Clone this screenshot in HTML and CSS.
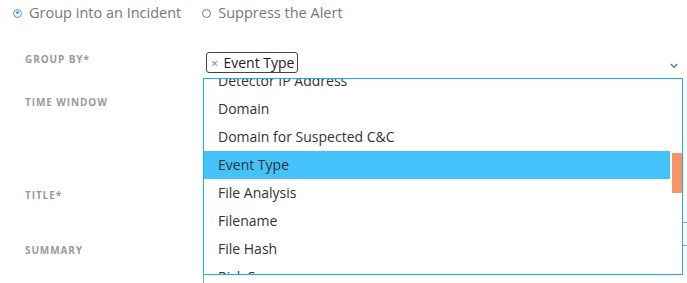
FILE: index.html
```html
<!DOCTYPE html>
<html>
  <head>
    <meta charset="UTF-8" />
    <title>Alert Rule</title>
    <link rel="stylesheet" href="styles.css">
  </head>
  <body>
    <div class="radios">
      <label class="radio">
        <span class="dot checked"></span>
        Group into an Incident
      </label>
      <label class="radio">
        <span class="dot"></span>
        Suppress the Alert
      </label>
    </div>

    <div class="form">
      <div class="row row-group">
        <div class="label">Group By*</div>
        <div class="field">
          <div class="select">
            <span class="chip"><span class="chip-x">&times;</span>Event Type</span>
            <svg class="chevron" width="8" height="6" viewBox="0 0 8 6">
              <path d="M0.8 1 L4 4.4 L7.2 1" fill="none" stroke="#5a6a80" stroke-width="1.3" />
            </svg>
            <div class="dropdown">
              <div class="options">
                <ul class="list">
                  <li>Detector IP Address</li>
                  <li>Domain</li>
                  <li>Domain for Suspected C&amp;C</li>
                  <li class="active">Event Type</li>
                  <li>File Analysis</li>
                  <li>Filename</li>
                  <li>File Hash</li>
                  <li>Risk Score</li>
                  <li>Source IP</li>
                </ul>
              </div>
              <div class="track"><div class="thumb"></div></div>
            </div>
          </div>
        </div>
      </div>

      <div class="row row-time">
        <div class="label">Time Window</div>
        <div class="field"></div>
      </div>

      <div class="row row-title">
        <div class="label">Title*</div>
        <div class="field"><div class="input"></div></div>
      </div>

      <div class="row row-summary">
        <div class="label">Summary</div>
        <div class="field"><div class="textarea"></div></div>
      </div>
    </div>
  </body>
</html>
```

FILE: styles.css
```css
body {
  margin: 0;
  font-family: "Open Sans", "DejaVu Sans", sans-serif;
  background-color: #fff;
  overflow: hidden;
}

.radios {
  display: flex;
  gap: 21px;
  padding: 0 0 0 13px;
  height: 26px;
}

.radio {
  display: flex;
  align-items: center;
  gap: 7px;
  font-size: 14.5px;
  line-height: 24px;
  color: #777;
}

.dot {
  box-sizing: border-box;
  width: 9px;
  height: 9px;
  border: 1.5px solid #777;
  border-radius: 50%;
  position: relative;
}

.dot.checked {
  border-color: #2aa3e8;
}

.dot.checked::after {
  content: "";
  position: absolute;
  left: 1.5px;
  top: 1.5px;
  width: 3px;
  height: 3px;
  border-radius: 50%;
  background-color: #2aa3e8;
}

.form {
  width: 740px;
  padding-top: 26px;
}

.row {
  display: grid;
  grid-template-columns: 203px 1fr;
}

.row-group {
  height: 43px;
}

.row-time {
  height: 93px;
}

.row-title {
  height: 55px;
}

.label {
  padding-left: 25px;
  font-size: 10px;
  line-height: 14px;
  font-weight: bold;
  letter-spacing: 0.9px;
  text-transform: uppercase;
  color: #9a9a9a;
}

.select {
  position: relative;
  width: 480px;
  height: 26px;
  display: flex;
  align-items: flex-start;
  justify-content: space-between;
  padding-left: 3px;
  box-sizing: border-box;
}

.chip {
  display: flex;
  align-items: center;
  height: 21px;
  box-sizing: border-box;
  padding: 0 3px 0 4px;
  border: 1px solid #444;
  border-radius: 3px;
  font-size: 14px;
  color: #222;
}

.chip-x {
  color: #888;
  font-size: 13px;
  margin-right: 5px;
}

.chevron {
  margin: 11px 5px 0 0;
}

.dropdown {
  position: absolute;
  z-index: 1;
  top: 26px;
  left: 0;
  width: 480px;
  height: 197px;
  box-sizing: border-box;
  border: 1px solid #19aef5;
  background-color: #fff;
  display: flex;
}

.options {
  flex: 1;
  overflow: hidden;
}

.list {
  list-style: none;
  margin: -12px 0 0 0;
  padding: 0;
}

.list li {
  height: 28px;
  line-height: 28px;
  padding-left: 14px;
  font-size: 14px;
  color: #333;
  white-space: nowrap;
}

.list li.active {
  background-color: #44c3fb;
}

.track {
  width: 12px;
  padding: 74px 0 0 2px;
  box-sizing: border-box;
}

.thumb {
  width: 10px;
  height: 40px;
  border-radius: 1px;
  background-color: #f5946a;
}

.input {
  height: 34px;
  border-bottom: 1px solid #999;
}

.textarea {
  margin-top: 2px;
  height: 80px;
  border: 1px solid #999;
}
```
